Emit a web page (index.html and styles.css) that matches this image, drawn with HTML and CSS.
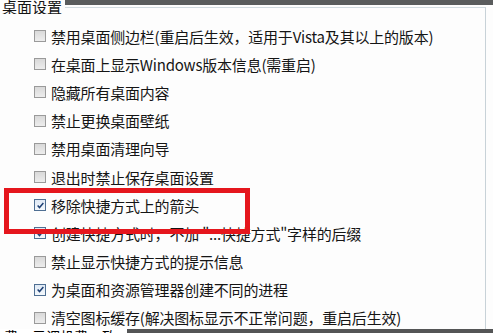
FILE: index.html
```html
<!DOCTYPE html>
<html lang="zh">
<head>
<meta charset="utf-8">
<link rel="stylesheet" href="styles.css">
</head>
<body>
<div class="page">
  <div class="top">
    <div class="top-gap"></div>
    <div class="top-band"></div>
  </div>
  <div class="group">
    <div class="title">桌面设置</div>
    <ul class="list">
      <li><span class="cb"></span>禁用桌面侧边栏(重启后生效，适用于Vista及其以上的版本)</li>
      <li><span class="cb"></span>在桌面上显示Windows版本信息(需重启)</li>
      <li><span class="cb"></span>隐藏所有桌面内容</li>
      <li><span class="cb"></span>禁止更换桌面壁纸</li>
      <li><span class="cb"></span>禁用桌面清理向导</li>
      <li><span class="cb"></span>退出时禁止保存桌面设置</li>
      <li><span class="cb on"><svg viewBox="0 0 11 11" width="9" height="9"><path d="M2 5.5 L4.3 8 L9 2.5" fill="none" stroke="#1d3f73" stroke-width="1.8"/></svg></span>移除快捷方式上的箭头</li>
      <li><span class="cb on"><svg viewBox="0 0 11 11" width="9" height="9"><path d="M2 5.5 L4.3 8 L9 2.5" fill="none" stroke="#1d3f73" stroke-width="1.8"/></svg></span>创建快捷方式时，不加 "...快捷方式"字样的后缀</li>
      <li><span class="cb"></span>禁止显示快捷方式的提示信息</li>
      <li><span class="cb on"><svg viewBox="0 0 11 11" width="9" height="9"><path d="M2 5.5 L4.3 8 L9 2.5" fill="none" stroke="#1d3f73" stroke-width="1.8"/></svg></span>为桌面和资源管理器创建不同的进程</li>
      <li><span class="cb"></span>清空图标缓存(解决图标显示不正常问题，重启后生效)</li>
    </ul>
  </div>
  <div class="foot">
    <div class="foot-left"><span class="foot-text">费　示调机费　致</span></div>
    <div class="foot-right"></div>
  </div>
  <div class="highlight"></div>
</div>
</body>
</html>
```
FILE: styles.css
```css
html, body {
  margin: 0;
  padding: 0;
  background: #fdfdfd;
}
.page {
  position: relative;
  width: 493px;
  height: 333px;
  overflow: hidden;
  display: flex;
  flex-direction: column;
  font-family: "Noto Sans CJK SC", "Noto Sans", sans-serif;
  color: #151515;
  background: #fdfdfd;
}
.top {
  flex: none;
  height: 7px;
  display: flex;
}
.top-gap {
  width: 65px;
}
.top-band {
  flex: 1;
  height: 5px;
  background: #5a5c5d;
}
.group {
  flex: 1;
  min-height: 0;
  margin-right: 7px;
  border-top: 1px solid #d2dbe0;
  border-right: 1px solid #c8d2d8;
}
.title {
  width: 63px;
  margin-top: -9px;
  padding-left: 2px;
  font-size: 15px;
  line-height: 15px;
  height: 15px;
  overflow: hidden;
  background: #fdfdfd;
  color: #141414;
}
.list {
  list-style: none;
  margin: 0;
  padding: 8px 0 0 34px;
}
.list li {
  display: flex;
  align-items: center;
  height: 28.2px;
  font-size: 15px;
  white-space: nowrap;
  letter-spacing: -0.2px;
}
.cb {
  width: 10px;
  height: 10px;
  border: 1px solid #9a9a9a;
  background: linear-gradient(#d9d9d9, #ededed);
  margin-right: 5px;
  flex: none;
  display: flex;
  align-items: center;
  justify-content: center;
}
.cb.on {
  border-color: #4f6f93;
  background: linear-gradient(#dfe9f5, #f4f8fc);
}
.foot {
  flex: none;
  height: 4px;
  display: flex;
  overflow: hidden;
}
.foot-left {
  width: 123px;
  background: #ffffff;
  overflow: hidden;
  padding-left: 4px;
}
.foot-text {
  display: block;
  font-size: 14px;
  line-height: 14px;
  color: #000;
  white-space: nowrap;
}
.foot-right {
  flex: 1;
  background: #545556;
}
.highlight {
  position: absolute;
  left: 4px;
  top: 188px;
  width: 236px;
  height: 36px;
  border: 5px solid #e5161d;
}
```
